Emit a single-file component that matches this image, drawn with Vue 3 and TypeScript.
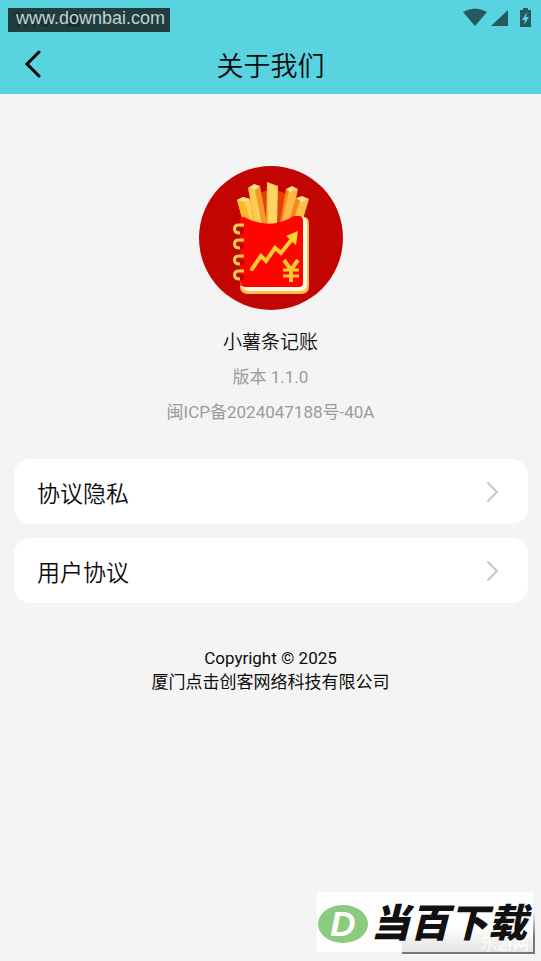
<script setup lang="ts">
interface LinkItem {
  label: string
  href: string
}

const links: LinkItem[] = [
  { label: '协议隐私', href: '#privacy' },
  { label: '用户协议', href: '#terms' },
]
const rings: number[] = [67, 82, 98, 113]
</script>

<template>
  <div class="page">
    <header class="top">
      <div class="status">
        <div class="clock">
          <span>1:16</span>
          <span class="chip"></span>
          <span class="site">www.downbai.com</span>
        </div>
        <svg class="signals" width="70" height="20" viewBox="0 0 70 20" aria-hidden="true">
          <path d="M0 4Q12-3 24 4L12 18Z" />
          <path d="M28 18L45 2V18Z" />
          <path fill-rule="evenodd" d="M60 0h5v2h3v17H57V2h3zM64 4l-5 8h3l-1 5 5-8h-3z" />
        </svg>
      </div>
      <nav class="bar">
        <button class="back" type="button" aria-label="返回">
          <svg width="20" height="30" viewBox="0 0 20 30">
            <path d="M15 4L3 16L15 28" />
          </svg>
        </button>
        <h1>关于我们</h1>
      </nav>
    </header>

    <main>
      <section class="about">
        <svg class="logo" width="144" height="144" viewBox="0 0 144 144" aria-hidden="true">
          <circle cx="72" cy="72" r="72" fill="#c20500" />
          <path d="M60 28Q72 20 87 28L98 56H49Z" fill="#e5400a" />
          <path d="M50 36L53 35L63 58H50Z" fill="#f57e14" />
          <path d="M38 34L44 31L51 33L55 56L43 52Z" fill="#ffcf58" />
          <path d="M38 34L46 36L51 54L43 51Z" fill="#fdb827" />
          <path d="M38 34L44 31L51 33L46 36Z" fill="#ffe08a" />
          <path d="M55 23L61 20L68 58H59Z" fill="#f49a2c" />
          <path d="M49 22L56 24L63 58H56Z" fill="#ffcb55" />
          <path d="M49 22L55 18L61 20L56 24Z" fill="#ffe08a" />
          <path d="M68 16L71 18L71 59H67Z" fill="#f7a032" />
          <path d="M68 16L79 20L78 59H69Z" fill="#ffd463" />
          <path d="M87 23L91 25L86 57H81Z" fill="#f58a1c" />
          <path d="M90 25L99 23L92 56H83Z" fill="#ffb945" />
          <path d="M87 23L93 20L99 23L91 26Z" fill="#ffe08a" />
          <path d="M97 32L103 35L97 54H90Z" fill="#f58a1c" />
          <path d="M101 35L110 33L104 53H95Z" fill="#ffbe4a" />
          <path d="M97 32L103 30L110 33L103 36Z" fill="#ffe08a" />
          <path d="M47 117H105V51Q110 51 110 58V120Q110 128 102 128H49Q41 128 41 120Z" fill="#ffbf45" />
          <path d="M41 116H103V50Q108 51 108 58V118Q108 125 101 125H49Q42 124 41 116Z" fill="#fff8e7" />
          <path d="M41 55Q41 51 45 51Q71 65 95 50H100Q104 50 104 55V117Q104 121 100 121H47Q41 121 41 115Z" fill="#ff0500" />
          <g v-for="y in rings" :key="y">
            <circle cx="42" :cy="y - 2" r="3" fill="#b30806" />
            <path
              :d="`M45 ${y - 8}H39.5Q35.5 ${y - 8} 35.5 ${y - 4}Q35.5 ${y} 41 ${y}`"
              fill="none"
              stroke="#ffcf4c"
              stroke-width="3"
            />
          </g>
          <g fill="none" stroke="#ffcb2a" stroke-width="4">
            <path d="M53 103L62 90L67 95L76 82L82 87L94 72" stroke-linecap="round" />
            <path d="M85 94L92 104L99 94M92 103V116" />
            <path d="M84 104H100M84 110H100" stroke-width="3" />
          </g>
          <path d="M87 70L99 65L97 79Z" fill="#ffd62a" />
        </svg>
        <h2>小薯条记账</h2>
        <p>版本 1.1.0</p>
        <p>闽ICP备2024047188号-40A</p>
      </section>

      <nav class="links">
        <a v-for="item in links" :key="item.href" :href="item.href">
          <span>{{ item.label }}</span>
          <svg width="14" height="22" viewBox="0 0 14 22" aria-hidden="true">
            <path d="M2 2L11 11L2 20" />
          </svg>
        </a>
      </nav>
    </main>

    <footer>
      <p>Copyright © 2025</p>
      <p>厦门点击创客网络科技有限公司</p>
    </footer>

    <div class="stamp">
      <span class="shade">乐游网</span>
      <span class="disc">D</span>
      <span class="brand">当百下载</span>
    </div>
  </div>
</template>

<style>
body {
  background: #f4f4f4;
}
</style>

<style scoped>
.page {
  position: relative;
  box-sizing: border-box;
  min-height: 100vh;
  background: #f4f4f4;
  color: #0c0c0c;
  font-family: Roboto, "Noto Sans CJK SC", sans-serif;
}
h1, h2, p {
  margin: 0;
  font-weight: 400;
}
.top {
  background: #59d3df;
}
.status {
  display: flex;
  justify-content: space-between;
  align-items: flex-start;
  height: 28px;
  padding: 8px 8px 0 8px;
}
.clock {
  position: relative;
  display: flex;
  align-items: center;
  gap: 16px;
  box-sizing: border-box;
  width: 162px;
  height: 24px;
  padding-left: 4px;
  background: #203d40;
  color: #102b2f;
  font-size: 20px;
}
.chip {
  width: 13px;
  height: 14px;
  background: #172c2f;
}
.site {
  position: absolute;
  inset: 0;
  padding-left: 8px;
  color: #c3d1d2;
  font: 18px/20px "Liberation Sans", sans-serif;
}
.signals {
  fill: #245a5e;
}
.bar {
  display: grid;
  grid-template-columns: 64px 1fr 64px;
  align-items: center;
  height: 58px;
}
.back {
  display: flex;
  padding: 0 0 4px 24px;
  border: 0;
  background: none;
}
.back path {
  fill: none;
  stroke: #050505;
  stroke-width: 3;
  stroke-linecap: round;
}
h1 {
  padding-top: 4px;
  text-align: center;
  font-size: 27px;
  font-weight: 350;
  line-height: 40px;
}
.about {
  display: flex;
  flex-direction: column;
  align-items: center;
  padding-top: 72px;
}
h2 {
  margin: 17px 0 1px;
  font-size: 19px;
  font-weight: 350;
  line-height: 32px;
}
.about p {
  color: #9b9b9b;
  font-size: 17px;
  line-height: 35px;
}
.links {
  display: flex;
  flex-direction: column;
  gap: 14px;
  padding: 29px 13px 0 14px;
}
.links a {
  display: flex;
  align-items: center;
  justify-content: space-between;
  height: 65px;
  padding: 0 28px 0 23px;
  border-radius: 16px;
  background: #fff;
  color: inherit;
  font-size: 23px;
  font-weight: 350;
  text-decoration: none;
}
.links path {
  fill: none;
  stroke: #c7c7c7;
  stroke-width: 2;
  stroke-linecap: round;
}
footer {
  padding-top: 43px;
  text-align: center;
  font-size: 17px;
  line-height: 24px;
}
.stamp {
  position: absolute;
  right: 8px;
  bottom: 9px;
  display: flex;
  align-items: center;
  width: 216px;
  height: 60px;
  background: #fefefe;
  white-space: nowrap;
}
.disc {
  flex: none;
  width: 50px;
  height: 38px;
  margin: 4px 0 0 1px;
  border-radius: 50%;
  background: #8ccb7d;
  color: #fff;
  font: italic 700 35px/38px "Liberation Sans", sans-serif;
  text-align: center;
}
.brand {
  position: relative;
  margin: 4px 0 0 3px;
  color: #111;
  font-size: 39px;
  font-style: italic;
  font-weight: 900;
  line-height: 60px;
}
.shade {
  position: absolute;
  right: -2px;
  bottom: -2px;
  box-sizing: border-box;
  width: 133px;
  height: 42px;
  padding-right: 4px;
  border-right: 2px solid #777;
  border-bottom: 2px solid #777;
  border-image: linear-gradient(#fefefe, #777 60%) 2;
  background: linear-gradient(#fefefe 40%, #e4e4e4);
  color: #fff;
  font-size: 16px;
  line-height: 64px;
  text-align: right;
}
</style>
